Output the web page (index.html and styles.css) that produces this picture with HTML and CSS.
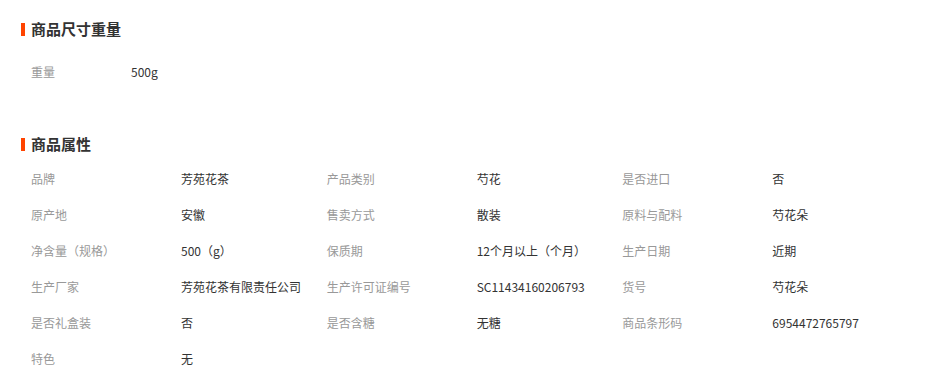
FILE: index.html
```html
<!DOCTYPE html>
<html lang="zh-CN">
<head>
<meta charset="utf-8">
<title>商品信息</title>
<link rel="stylesheet" href="styles.css">
</head>
<body>
<div class="page">
  <section class="section section-size">
    <h2 class="title">商品尺寸重量</h2>
    <div class="size-row">
      <span class="label size-label">重量</span>
      <span class="value">500g</span>
    </div>
  </section>
  <section class="section section-attr">
    <h2 class="title">商品属性</h2>
    <div class="attr-grid">
      <div class="item"><span class="label">品牌</span><span class="value">芳苑花茶</span></div>
      <div class="item"><span class="label">产品类别</span><span class="value">芍花</span></div>
      <div class="item"><span class="label">是否进口</span><span class="value">否</span></div>
      <div class="item"><span class="label">原产地</span><span class="value">安徽</span></div>
      <div class="item"><span class="label">售卖方式</span><span class="value">散装</span></div>
      <div class="item"><span class="label">原料与配料</span><span class="value">芍花朵</span></div>
      <div class="item"><span class="label">净含量（规格）</span><span class="value">500（g）</span></div>
      <div class="item"><span class="label">保质期</span><span class="value">12个月以上（个月）</span></div>
      <div class="item"><span class="label">生产日期</span><span class="value">近期</span></div>
      <div class="item"><span class="label">生产厂家</span><span class="value">芳苑花茶有限责任公司</span></div>
      <div class="item"><span class="label">生产许可证编号</span><span class="value">SC11434160206793</span></div>
      <div class="item"><span class="label">货号</span><span class="value">芍花朵</span></div>
      <div class="item"><span class="label">是否礼盒装</span><span class="value">否</span></div>
      <div class="item"><span class="label">是否含糖</span><span class="value">无糖</span></div>
      <div class="item"><span class="label">商品条形码</span><span class="value">6954472765797</span></div>
      <div class="item"><span class="label">特色</span><span class="value">无</span></div>
    </div>
  </section>
</div>
</body>
</html>
```
FILE: styles.css
```css
* { box-sizing: border-box; }
html, body { margin: 0; padding: 0; background: #fff; }
body {
  font-family: "Noto Sans CJK SC", "Liberation Sans", sans-serif;
  font-size: 12px;
  color: #333;
}
.page {
  width: 940px;
  padding: 19px 0 0 21px;
}
.title {
  margin: 0;
  height: 20px;
  line-height: 20px;
  font-size: 15px;
  font-weight: bold;
  color: #333;
  display: flex;
  align-items: center;
  gap: 6px;
}
.title::before {
  content: "";
  width: 4px;
  height: 13px;
  background: #ff4400;
  display: block;
}
.size-row {
  margin-top: 15px;
  padding-left: 10px;
  height: 36px;
  line-height: 36px;
  display: flex;
}
.size-label { width: 100px; }
.section-attr { margin-top: 44px; }
.attr-grid {
  margin-top: 7px;
  padding-left: 10px;
  width: 897px;
  display: grid;
  grid-template-columns: repeat(3, 1fr);
}
.item {
  display: flex;
  height: 36px;
  line-height: 36px;
}
.item .label { width: 150px; flex: none; }
.label { color: #999; }
.value { color: #333; white-space: nowrap; }
```
